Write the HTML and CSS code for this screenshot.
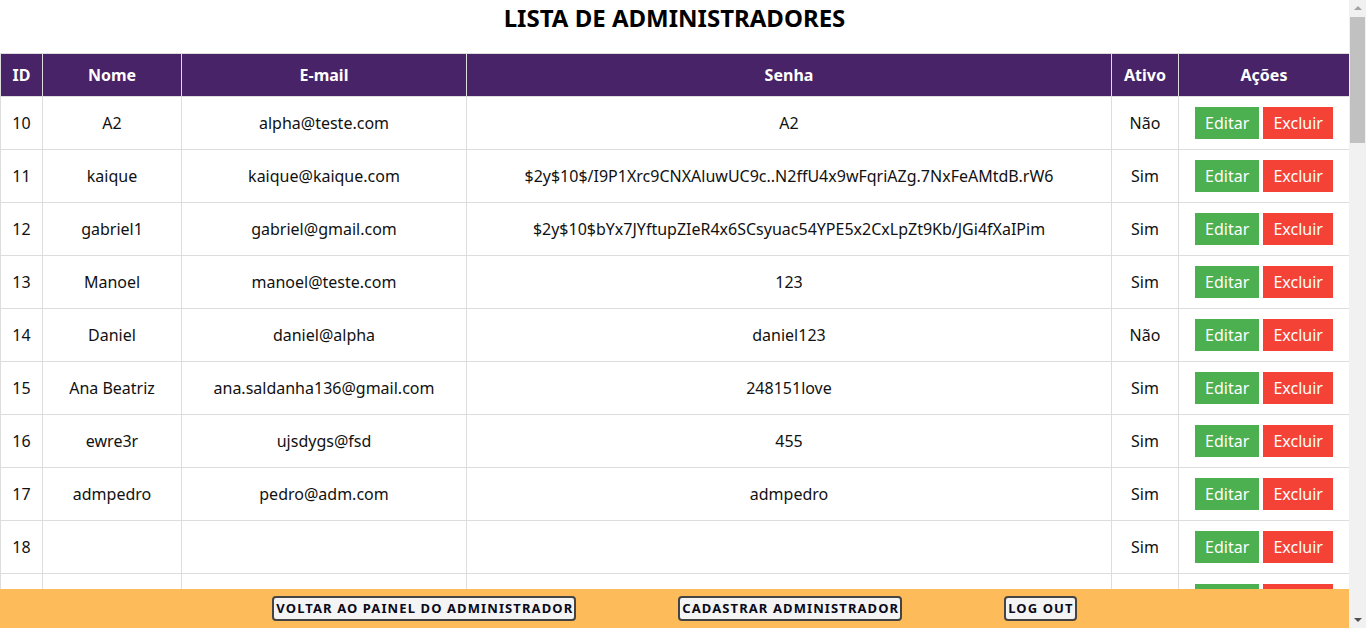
FILE: index.html
```html
<!DOCTYPE html>
<html lang="pt-BR">
<head>
<meta charset="utf-8">
<title>Lista de Administradores</title>
<link rel="stylesheet" href="styles.css">
</head>
<body>
<main class="page">
  <h1 class="title">LISTA DE ADMINISTRADORES</h1>
  <table class="admins">
    <colgroup>
      <col class="c-id"><col class="c-nome"><col class="c-email"><col class="c-senha"><col class="c-ativo"><col class="c-acoes">
    </colgroup>
    <thead>
      <tr><th>ID</th><th>Nome</th><th>E-mail</th><th>Senha</th><th>Ativo</th><th>Ações</th></tr>
    </thead>
    <tbody>
      <tr><td>10</td><td>A2</td><td>alpha@teste.com</td><td>A2</td><td>Não</td><td class="acts"><button class="btn edit">Editar</button> <button class="btn del">Excluir</button></td></tr>
      <tr><td>11</td><td>kaique</td><td>kaique@kaique.com</td><td>$2y$10$/I9P1Xrc9CNXAluwUC9c..N2ffU4x9wFqriAZg.7NxFeAMtdB.rW6</td><td>Sim</td><td class="acts"><button class="btn edit">Editar</button> <button class="btn del">Excluir</button></td></tr>
      <tr><td>12</td><td>gabriel1</td><td>gabriel@gmail.com</td><td>$2y$10$bYx7JYftupZIeR4x6SCsyuac54YPE5x2CxLpZt9Kb/JGi4fXaIPim</td><td>Sim</td><td class="acts"><button class="btn edit">Editar</button> <button class="btn del">Excluir</button></td></tr>
      <tr><td>13</td><td>Manoel</td><td>manoel@teste.com</td><td>123</td><td>Sim</td><td class="acts"><button class="btn edit">Editar</button> <button class="btn del">Excluir</button></td></tr>
      <tr><td>14</td><td>Daniel</td><td>daniel@alpha</td><td>daniel123</td><td>Não</td><td class="acts"><button class="btn edit">Editar</button> <button class="btn del">Excluir</button></td></tr>
      <tr><td>15</td><td>Ana Beatriz</td><td>ana.saldanha136@gmail.com</td><td>248151love</td><td>Sim</td><td class="acts"><button class="btn edit">Editar</button> <button class="btn del">Excluir</button></td></tr>
      <tr><td>16</td><td>ewre3r</td><td>ujsdygs@fsd</td><td>455</td><td>Sim</td><td class="acts"><button class="btn edit">Editar</button> <button class="btn del">Excluir</button></td></tr>
      <tr><td>17</td><td>admpedro</td><td>pedro@adm.com</td><td>admpedro</td><td>Sim</td><td class="acts"><button class="btn edit">Editar</button> <button class="btn del">Excluir</button></td></tr>
      <tr><td>18</td><td></td><td></td><td></td><td>Sim</td><td class="acts"><button class="btn edit">Editar</button> <button class="btn del">Excluir</button></td></tr>
      <tr class="hidden-row"><td>19</td><td></td><td></td><td></td><td>Sim</td><td class="acts"><button class="btn edit">Editar</button> <button class="btn del">Excluir</button></td></tr>
    </tbody>
  </table>
</main>
<footer class="bar">
  <button class="nav-btn">VOLTAR AO PAINEL DO ADMINISTRADOR</button>
  <button class="nav-btn">CADASTRAR ADMINISTRADOR</button>
  <button class="nav-btn">LOG OUT</button>
</footer>
<div class="scrollbar" aria-hidden="true">
  <span class="sb-arrow sb-up"></span>
  <span class="sb-thumb"></span>
  <span class="sb-arrow sb-down"></span>
</div>
</body>
</html>
```
FILE: styles.css
```css
html, body {
  margin: 0;
  padding: 0;
}
body {
  font-family: "Noto Sans", "Open Sans", sans-serif;
  color: #111;
  background: #fff;
}
.page {
  margin-right: 17px;
  height: 628px;
  overflow: hidden;
}
.title {
  margin: 0;
  padding: 1px 0 19px;
  font-size: 24px;
  line-height: 33px;
  font-weight: 700;
  text-align: center;
  color: #000;
}
.admins {
  width: 100%;
  border-collapse: collapse;
  table-layout: fixed;
  font-size: 16px;
}
.c-id { width: 42px; }
.c-nome { width: 139px; }
.c-email { width: 285px; }
.c-senha { width: 645px; }
.c-ativo { width: 67px; }
.c-acoes { width: 171px; }
.admins th,
.admins td {
  border: 1px solid #ddd;
  padding: 10px 4px;
  text-align: center;
  line-height: 22px;
  white-space: nowrap;
  overflow: hidden;
}
.admins th {
  background: #482367;
  color: #fff;
  font-weight: 700;
}
.admins td {
  height: 32px;
}
.btn {
  font-family: "Noto Sans", "Open Sans", sans-serif;
  font-size: 16px;
  line-height: 22px;
  padding: 5px 10px;
  border: 0;
  color: #fff;
  margin: 0;
  vertical-align: middle;
}
.edit { background: #4caf50; }
.del { background: #f44336; }
.bar {
  position: fixed;
  left: 0;
  right: 17px;
  bottom: 0;
  height: 39px;
  background: #fdbb5a;
  display: flex;
  justify-content: center;
  align-items: center;
  gap: 102px;
}
.nav-btn {
  font-family: "Noto Sans", "Open Sans", sans-serif;
  font-size: 13px;
  font-weight: 700;
  letter-spacing: 1.1px;
  line-height: 21px;
  color: #0a0a1a;
  background: #f4f4f4;
  border: 2px solid #444;
  border-radius: 4px;
  padding: 0 1px 0 2px;
  margin: 0;
}
.scrollbar {
  position: fixed;
  top: 0;
  right: 0;
  bottom: 0;
  width: 17px;
  background: #f1f1f1;
  display: flex;
  flex-direction: column;
  align-items: center;
}
.sb-arrow {
  width: 0;
  height: 0;
}
.sb-up {
  margin-top: 6px;
  border-left: 4px solid transparent;
  border-right: 4px solid transparent;
  border-bottom: 4px solid #a3a3a3;
}
.sb-thumb {
  margin-top: 7px;
  width: 15px;
  height: 126px;
  background: #c1c1c1;
}
.sb-down {
  margin-top: auto;
  margin-bottom: 6px;
  border-left: 4px solid transparent;
  border-right: 4px solid transparent;
  border-top: 4px solid #505050;
}
```
